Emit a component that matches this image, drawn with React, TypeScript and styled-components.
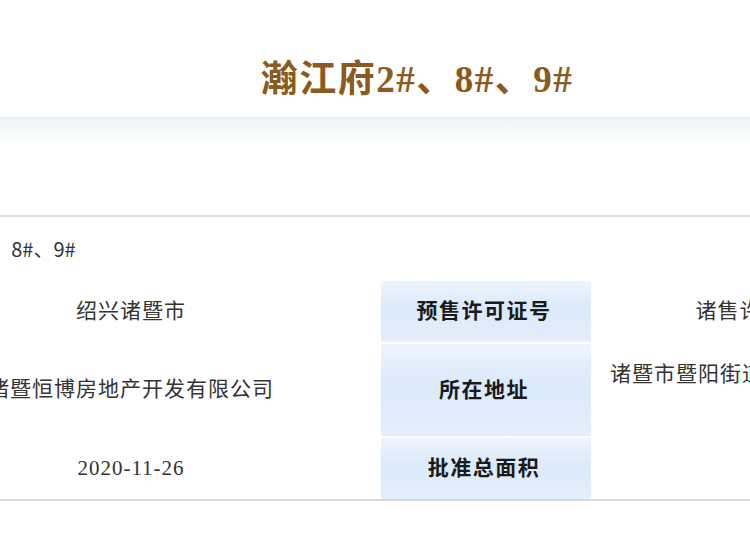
import styled, { createGlobalStyle } from "styled-components";

const GlobalStyle = createGlobalStyle`
  html, body {
    margin: 0;
    padding: 0;
    background: #fff;
  }
  body {
    width: 750px;
    height: 560px;
    overflow: hidden;
    font-family: "Liberation Serif", "Noto Sans CJK SC", serif;
  }
`;

const rows = [
  { label: "预售许可证号", value: "绍兴诸暨市", extra: "诸售许字（2020）第000058号", height: 61 },
  {
    label: "所在地址",
    value: "诸暨恒博房地产开发有限公司",
    extra: "诸暨市暨阳街道浣纱南路以东、规划道路以南地块",
    height: 92,
  },
  { label: "批准总面积", value: "2020-11-26", extra: "", height: 61 },
];

const App = () => {
  return (
    <>
      <GlobalStyle />
      <Page>
        <TitleBar>
          <Title>瀚江府2#、8#、9#</Title>
        </TitleBar>
        <Band />
        <TableWrap>
          <Table>
            <Row $h={62}>
              <HeadCell>项目名称</HeadCell>
              <WideCell>瀚江府2#、8#、9#</WideCell>
            </Row>
            {rows.map((r) => (
              <Row key={r.label} $h={r.height}>
                <HeadCell>行政区域</HeadCell>
                <Cell>{r.value}</Cell>
                <HeadCell>{r.label}</HeadCell>
                <Cell>{r.extra}</Cell>
              </Row>
            ))}
          </Table>
        </TableWrap>
      </Page>
    </>
  );
};

const Page = styled.div`
  width: 750px;
  overflow: hidden;
`;

const TitleBar = styled.div`
  height: 117px;
  display: flex;
  align-items: center;
  justify-content: center;
  padding-left: 84px;
  padding-top: 42px;
  box-sizing: border-box;
`;

const Title = styled.h1`
  margin: 0;
  font-family: "Liberation Serif", "Noto Sans CJK SC", serif;
  font-size: 37px;
  font-weight: bold;
  letter-spacing: 1.5px;
  color: #8a5a20;
  line-height: 40px;
`;

const Band = styled.div`
  height: 28px;
  border-top: 2px solid #e6f0f7;
  background: linear-gradient(#f0f5f8, #f7fafb 50%, #ffffff);
`;

const TableWrap = styled.div`
  margin-top: 68px;
  border-top: 2px solid #dadada;
  border-bottom: 2px solid #dadada;
  overflow: hidden;
`;

const Table = styled.div`
  display: grid;
  grid-template-columns: 210px 496px 210px 496px;
  row-gap: 2px;
  column-gap: 2px;
  margin-left: -329px;
  width: 1418px;
`;

const Row = styled.div<{ $h: number }>`
  display: contents;
  & > * {
    height: ${(p) => p.$h}px;
  }
`;

const HeadCell = styled.div`
  display: flex;
  align-items: center;
  justify-content: center;
  box-sizing: border-box;
  padding-bottom: 5px;
  padding-right: 4px;
  background: linear-gradient(#edf5fe, #dbe9fb 45%, #e4effc);
  font-family: "Noto Sans CJK SC", sans-serif;
  font-size: 21px;
  font-weight: bold;
  letter-spacing: 1.5px;
  color: #1a1a1a;
`;

const Cell = styled.div`
  display: flex;
  align-items: center;
  justify-content: center;
  text-align: center;
  padding: 0 8px 2px;
  box-sizing: border-box;
  font-size: 21px;
  letter-spacing: 1px;
  line-height: 30px;
  color: #333;
`;

const WideCell = styled.div`
  grid-column: span 3;
  display: flex;
  align-items: center;
  padding-left: 26px;
  font-family: "Noto Sans CJK SC", sans-serif;
  font-size: 20px;
  color: #333;
`;

export default App;
